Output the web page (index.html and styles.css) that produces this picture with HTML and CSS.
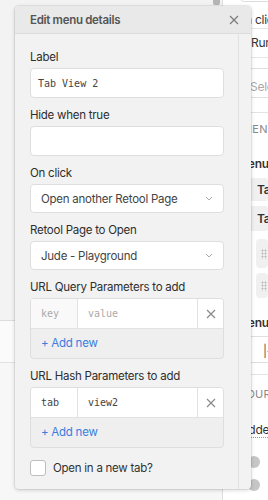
FILE: index.html
```html
<!DOCTYPE html>
<html>
<head>
<meta charset="utf-8">
<link rel="stylesheet" href="styles.css">
</head>
<body>
<div class="page">
  <div class="left-area">
    <div class="left-top"><div class="thumb"></div></div>
    <div class="left-band"></div>
    <div class="left-bottom"></div>
  </div>
  <div class="right-panel">
    <div class="top-box"></div>
    <div class="rp-row rp-first"><span class="t-onclick">On click</span></div>
    <div class="rp-row rp-second"><span class="t-run">Run query</span></div>
    <div class="rp-select"><span class="t-select">Select…</span></div>
    <div class="rp-divider"></div>
    <div class="rp-caps t-menu">MENU</div>
    <div class="rp-heading t-menuitems">Menu items</div>
    <div class="rp-tab">Tab View 1</div>
    <div class="rp-tab">Tab View 2</div>
    <div class="rp-drag"><span class="dots"></span></div>
    <div class="rp-drag"><span class="dots"></span></div>
    <div class="rp-heading t-menu2">Menu style</div>
    <div class="rp-box"><span class="t-bar">|-</span></div>
    <div class="rp-divider2"></div>
    <div class="rp-caps t-you">YOUR</div>
    <div class="rp-hidden"><span class="dotted">Hidden</span></div>
    <div class="rp-radio"><span class="circle"></span><span class="r-text">l</span></div>
    <div class="rp-radio"><span class="circle"></span><span class="r-text">a</span></div>
  </div>
</div>

<div class="modal">
  <div class="modal-header">
    <span class="modal-title">Edit menu details</span>
    <svg class="close" width="10" height="10" viewBox="0 0 10 10"><path d="M1 1L9 9M9 1L1 9" stroke="#7a7a7a" stroke-width="1.2" fill="none"/></svg>
  </div>
  <div class="modal-body">
    <div class="content">
      <div class="field">
        <div class="label">Label</div>
        <div class="input mono">Tab View 2</div>
      </div>
      <div class="field">
        <div class="label">Hide when true</div>
        <div class="input mono"></div>
      </div>
      <div class="field">
        <div class="label">On click</div>
        <div class="input select"><span>Open another Retool Page</span>
          <svg class="chev" width="8" height="5" viewBox="0 0 8 5"><path d="M1 1L4 4L7 1" stroke="#aaa" stroke-width="1" fill="none"/></svg></div>
      </div>
      <div class="field">
        <div class="label">Retool Page to Open</div>
        <div class="input select"><span>Jude - Playground</span>
          <svg class="chev" width="8" height="5" viewBox="0 0 8 5"><path d="M1 1L4 4L7 1" stroke="#aaa" stroke-width="1" fill="none"/></svg></div>
      </div>
      <div class="field">
        <div class="label">URL Query Parameters to add</div>
        <div class="params">
          <div class="param-row">
            <div class="cell key placeholder keycell-empty">key</div>
            <div class="cell value placeholder">value</div>
            <div class="cell remove"><svg width="10" height="10" viewBox="0 0 10 10"><path d="M1 1L9 9M9 1L1 9" stroke="#8a8a8a" stroke-width="1.2" fill="none"/></svg></div>
          </div>
          <div class="add-row">+ Add new</div>
        </div>
      </div>
      <div class="field">
        <div class="label">URL Hash Parameters to add</div>
        <div class="params">
          <div class="param-row">
            <div class="cell key">tab</div>
            <div class="cell value">view2</div>
            <div class="cell remove"><svg width="10" height="10" viewBox="0 0 10 10"><path d="M1 1L9 9M9 1L1 9" stroke="#8a8a8a" stroke-width="1.2" fill="none"/></svg></div>
          </div>
          <div class="add-row">+ Add new</div>
        </div>
      </div>
      <label class="check-row"><span class="checkbox"></span><span>Open in a new tab?</span></label>
    </div>
    <div class="scroll-track"></div>
  </div>
</div>
</body>
</html>
```
FILE: styles.css
```css
html, body {
  margin: 0;
  padding: 0;
}
body {
  width: 268px;
  height: 500px;
  overflow: hidden;
  position: relative;
  font-family: Inter, "Liberation Sans", sans-serif;
  font-size: 11.5px;
  letter-spacing: -0.25px;
  color: #333;
  background: #f4f4f4;
}
.page {
  display: flex;
  height: 500px;
  overflow: hidden;
}
.left-area {
  width: 222px;
  flex: none;
  display: flex;
  flex-direction: column;
  border-right: 1px solid #dedede;
}
.left-top {
  height: 320px;
  background: #f3f3f3;
  position: relative;
}
.thumb {
  position: absolute;
  left: 213px;
  top: 0;
  width: 7px;
  height: 5px;
  background: #b5b5b5;
  border-radius: 0 0 2px 2px;
}
.left-band {
  height: 41px;
  background: #fbfbfb;
  border-top: 1px solid #dcdcdc;
  border-bottom: 1px solid #e2e2e2;
}
.left-bottom {
  flex: 1;
  background: #f7f7f7;
}

/* right background panel */
.right-panel {
  flex: none;
  width: 45px;
  overflow: hidden;
  background: #fff;
  padding-left: 17px;
  box-sizing: border-box;
  display: flex;
  flex-direction: column;
  white-space: nowrap;
  color: #333;
  font-size: 12px;
}
.top-box {
  flex: none;
  margin-top: -18px;
  height: 18px;
  width: 200px;
  border: 1px solid #dcdcdc;
  border-radius: 4px;
}
.rp-row {
  flex: none;
  line-height: 16px;
  border-bottom: 1px solid #e6e6e6;
}
.rp-first { padding: 10px 0 0; }
.rp-second { padding: 6px 0; }
.t-onclick { margin-left: -4px; }
.t-run { margin-left: 11px; }
.rp-select {
  flex: none;
  margin-top: 10px;
  width: 200px;
  border: 1px solid #e0e0e0;
  border-radius: 4px;
  line-height: 16px;
  padding-top: 10px;
  box-sizing: border-box;
  height: 30px;
  color: #aaa;
}
.t-select { margin-left: 9px; }
.rp-divider {
  flex: none;
  margin-top: 14px;
  height: 1px;
  background: #e3e3e3;
}
.rp-caps {
  flex: none;
  font-size: 11px;
  color: #888;
  letter-spacing: 0.3px;
  line-height: 14px;
  margin-top: 9px;
}
.t-menu { margin-left: 2px; }
.rp-heading {
  flex: none;
  font-weight: 600;
  line-height: 16px;
  margin-top: 20px;
  margin-left: -3px;
}
.rp-tab {
  flex: none;
  margin-top: 6px;
  height: 23px;
  line-height: 23px;
  background: #f0f0f0;
  border-radius: 3px;
  font-weight: 600;
  padding-left: 17px;
}
.rp-tab + .rp-tab { margin-top: 5px; height: 25px; line-height: 25px; }
.rp-drag {
  flex: none;
  margin-top: 8px;
  margin-left: 16px;
  height: 29px;
  background: #f0f0f0;
  border-radius: 4px;
  position: relative;
}
.rp-drag + .rp-drag { margin-top: 5px; height: 25px; }
.dots {
  position: absolute;
  left: 5px;
  top: 50%;
  margin-top: -5px;
  width: 6px;
  height: 10px;
  background-image: radial-gradient(circle, #b8b8b8 0.9px, transparent 1.1px);
  background-size: 3px 3px;
}
.t-menu2 { margin-top: 17px; }
.rp-box {
  flex: none;
  margin-top: 5px;
  height: 27px;
  width: 200px;
  line-height: 27px;
  border: 1px solid #e0e0e0;
  border-radius: 4px;
  box-sizing: border-box;
  padding-left: 22px;
  color: #555;
}
.rp-divider2 {
  flex: none;
  margin-top: 11px;
  height: 1px;
  background: #e3e3e3;
}
.t-you { margin-top: 12px; margin-left: -1px; }
.rp-hidden {
  flex: none;
  margin-top: 22px;
  line-height: 14px;
}
.dotted {
  margin-left: -3px;
  border-bottom: 1px dotted #999;
}
.rp-radio {
  flex: none;
  margin-top: 19px;
  display: flex;
  align-items: center;
  gap: 8px;
  margin-left: 8px;
  height: 12px;
}
.rp-radio + .rp-radio { margin-top: 11px; }
.circle {
  flex: none;
  width: 12px;
  height: 12px;
  border-radius: 50%;
  background: #c6c6c6;
}
.r-text { color: #444; }

/* modal */
.modal {
  position: absolute;
  left: 15px;
  top: 6px;
  width: 236px;
  height: 483px;
  background: #f2f2f2;
  border-radius: 4px;
  box-shadow: 0 1px 4px rgba(0,0,0,0.18), 0 0 0 1px rgba(0,0,0,0.05);
  display: flex;
  flex-direction: column;
  overflow: hidden;
}
.modal-header {
  flex: none;
  height: 27px;
  border-bottom: 1px solid #dcdcdc;
  background: #e9e9e9;
  display: flex;
  align-items: center;
  justify-content: space-between;
  padding: 0 12px 0 15px;
}
.modal-title {
  font-weight: 600;
  color: #555;
  font-size: 11.5px;
  letter-spacing: -0.3px;
}
.close { display: block; }
.modal-body {
  flex: 1;
  display: flex;
}
.content {
  width: 223px;
  box-sizing: border-box;
  padding: 15px 14px 0 15px;
}
.scroll-track {
  flex: 1;
  border-left: 1px solid #e2e2e2;
}
.field { margin-bottom: 9px; }
.label {
  line-height: 16px;
  margin-bottom: 3px;
  color: #2e2e2e;
}
.input {
  height: 30px;
  box-sizing: border-box;
  background: #fff;
  border: 1px solid #dedede;
  border-radius: 4px;
  display: flex;
  align-items: center;
  padding-left: 7px;
  color: #444;
}
.mono {
  font-family: "DejaVu Sans Mono", "Liberation Mono", monospace;
  font-size: 10px;
  letter-spacing: 0;
}
.select {
  padding: 0 10px 0 10px;
  justify-content: space-between;
  height: 29px;
  color: #444;
}
.params {
  border: 1px solid #dedede;
  border-radius: 4px;
  background: #efefef;
  overflow: hidden;
}
.param-row {
  display: flex;
  height: 30px;
  background: #fff;
  border-bottom: 1px solid #e2e2e2;
  box-sizing: border-box;
}
.cell {
  display: flex;
  align-items: center;
  font-family: "DejaVu Sans Mono", "Liberation Mono", monospace;
  font-size: 10px;
  letter-spacing: 0;
  color: #444;
}
.key {
  width: 47px;
  padding-left: 10px;
  box-sizing: border-box;
  border-right: 1px solid #e2e2e2;
}
.keycell-empty { background: #f9f9f9; }
.value {
  flex: 1;
  padding-left: 10px;
  border-right: 1px solid #e2e2e2;
}
.placeholder { color: #aaa; }
.remove {
  width: 25px;
  justify-content: center;
}
.remove svg { display: block; }
.add-row {
  height: 29px;
  line-height: 29px;
  padding-left: 10px;
  color: #3b7de0;
}
.check-row {
  display: flex;
  align-items: center;
  gap: 7px;
  margin-top: 12px;
}
.checkbox {
  flex: none;
  width: 14px;
  height: 14px;
  border: 1px solid #bdbdbd;
  border-radius: 3px;
  background: #fff;
}
```
